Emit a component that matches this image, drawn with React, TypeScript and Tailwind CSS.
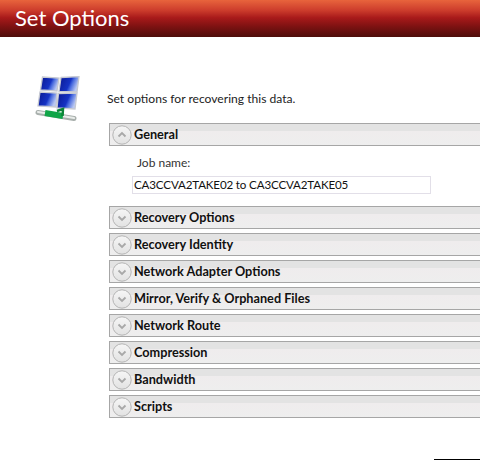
const font = { fontFamily: 'Lato, "Open Sans", sans-serif' }

const sections = [
  "Recovery Options",
  "Recovery Identity",
  "Network Adapter Options",
  "Mirror, Verify & Orphaned Files",
  "Network Route",
  "Compression",
  "Bandwidth",
  "Scripts",
]

function Chevron({ up }: { up?: boolean }) {
  return (
    <svg width="20" height="20" viewBox="0 0 20 20" className="shrink-0">
      <defs>
        <linearGradient id={up ? "knobUp" : "knobDown"} x1="0" y1="0" x2="0" y2="1">
          <stop offset="0" stopColor="#f6f6f6" />
          <stop offset="1" stopColor="#e2e2e2" />
        </linearGradient>
      </defs>
      <circle cx="10" cy="10" r="9.2" fill={`url(#${up ? "knobUp" : "knobDown"})`} stroke="#b4b4b4" strokeWidth="1" />
      <path
        d={up ? "M6.5 11.5 L10 8 L13.5 11.5" : "M6.5 8.5 L10 12 L13.5 8.5"}
        fill="none"
        stroke="#a8a8a8"
        strokeWidth="1.8"
      />
    </svg>
  )
}

function SectionBar({ title, up }: { title: string; up?: boolean }) {
  return (
    <div className="flex h-[23px] items-center border-y border-l border-[#a6a6a6] bg-[linear-gradient(#e3e3e3_0,#e3e3e3_7px,#efeced_7px,#eeeeee_100%)] pl-[2px]">
      <Chevron up={up} />
      <span className="ml-[2px] text-[12.7px] font-bold text-[#111]">{title}</span>
    </div>
  )
}

function NetworkIcon() {
  const panes = [
    "M8.5 1 L25 2 L23 15 L6.5 14 Z",
    "M27 1.5 L45 0.5 L43 16 L25 15.5 Z",
    "M6 16 L23 17 L22 31 L4 30 Z",
    "M24.5 17.5 L43 17 L41 33 L23 32 Z",
  ]
  return (
    <svg width="46" height="50" viewBox="0 0 46 50" className="shrink-0">
      <defs>
        <linearGradient id="pane" x1="0" y1="0" x2="1" y2="0.35">
          <stop offset="0" stopColor="#0a1890" />
          <stop offset="0.6" stopColor="#1532c4" />
          <stop offset="0.72" stopColor="#4668de" />
          <stop offset="1" stopColor="#b9c7f2" />
        </linearGradient>
      </defs>
      {panes.map((d) => (
        <path key={d} d={d} fill="url(#pane)" stroke="#c6c9d2" strokeWidth="1.3" />
      ))}
      <path d="M4 36.5 L40 42.5" stroke="#a9b0ad" strokeWidth="5" strokeLinecap="round" />
      <path d="M4 36 L40 42" stroke="#e9ecea" strokeWidth="2.2" strokeLinecap="round" />
      <path d="M11 37 L29 40" stroke="#10a548" strokeWidth="6" />
      <path d="M23 35 L29 33 L28.5 40" stroke="#0b8537" strokeWidth="2.5" fill="none" />
    </svg>
  )
}

export default function App() {
  return (
    <div className="relative h-[460px] w-[480px] overflow-hidden bg-white" style={font}>
      <header className="flex h-[37px] items-center bg-[linear-gradient(#e8643c_0,#cc3c2c_28%,#a81a1a_48%,#7d1212_72%,#4e0e0a_100%)] pb-[2px] pl-[15px]">
        <h1 className="text-[22px] font-normal leading-none text-white">Set Options</h1>
      </header>

      <div className="flex pl-[34px] pt-[39px]">
        <NetworkIcon />
        <div className="ml-[27px] mt-[15px] text-[12.1px] leading-[16px] text-[#222]">
          Set options for recovering this data.
        </div>
      </div>

      <div className="ml-[109px] mt-[-3px] flex flex-col">
        <SectionBar title="General" up />
        <div className="h-[60px]">
          <div className="pl-[28px] pt-[9px] text-[12px] leading-[16px] text-[#333]">
            Job name:
          </div>
          <div className="ml-[23px] mt-[5px] flex h-[18px] w-[299px] items-center border border-[#e2dfe8] pl-[1px] text-[11.6px] tracking-[-0.15px] text-[#111]">
            CA3CCVA2TAKE02 to CA3CCVA2TAKE05
          </div>
        </div>
        <div className="flex flex-col gap-[4px]">
          {sections.map((s) => (
            <SectionBar key={s} title={s} />
          ))}
        </div>
      </div>

      <div className="absolute bottom-0 right-0 h-px w-[46px] bg-black" />
    </div>
  )
}
